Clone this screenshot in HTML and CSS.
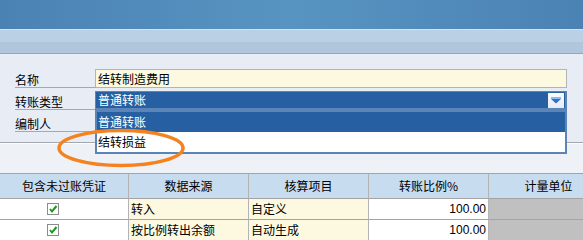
FILE: index.html
```html
<!DOCTYPE html>
<html lang="zh-CN">
<head>
  <meta charset="UTF-8" />
  <title>转账定义</title>
  <link rel="stylesheet" href="styles.css">
</head>
<body>
  <div class="window">
    <div class="titlebar"></div>
    <div class="toolbar"></div>

    <section class="form">
      <div class="form-row">
        <div class="label">名称</div>
        <div class="text-input">结转制造费用</div>
      </div>
      <div class="form-row">
        <div class="label">转账类型</div>
        <div class="select">
          <span>普通转账</span>
          <span class="select-btn">
            <svg width="10" height="7" viewBox="0 0 10 7">
              <rect x="0" y="0" width="10" height="2" fill="#8fb8ec"/>
              <polygon points="0,2 10,2 5,6.5" fill="#2f6fd0"/>
            </svg>
          </span>
          <ul class="select-list">
            <li class="selected">普通转账</li>
            <li>结转损益</li>
          </ul>
        </div>
      </div>
      <div class="form-row">
        <div class="label">编制人</div>
        <div></div>
      </div>

      <svg class="mark" width="132" height="44" viewBox="0 0 132 44">
        <ellipse cx="65" cy="21" rx="62" ry="17.5" fill="none" stroke="#f5821f" stroke-width="3.5"/>
      </svg>
    </section>

    <section class="grid-area">
      <div class="grid">
        <div class="cell head">包含未过账凭证</div>
        <div class="cell head">数据来源</div>
        <div class="cell head">核算项目</div>
        <div class="cell head">转账比例%</div>
        <div class="cell head">计量单位</div>

        <div class="cell check"><svg width="12" height="12" viewBox="0 0 12 12"><rect x="0.5" y="0.5" width="11" height="11" fill="#fff" stroke="#8c8c8c"/><path d="M3 6 L5 8.5 L9.5 3" fill="none" stroke="#1a9a1a" stroke-width="2"/></svg></div>
        <div class="cell cream">转入</div>
        <div class="cell cream">自定义</div>
        <div class="cell num">100.00</div>
        <div class="cell grey"></div>

        <div class="cell check"><svg width="12" height="12" viewBox="0 0 12 12"><rect x="0.5" y="0.5" width="11" height="11" fill="#fff" stroke="#8c8c8c"/><path d="M3 6 L5 8.5 L9.5 3" fill="none" stroke="#1a9a1a" stroke-width="2"/></svg></div>
        <div class="cell cream">按比例转出余额</div>
        <div class="cell cream">自动生成</div>
        <div class="cell num">100.00</div>
        <div class="cell grey"></div>
      </div>
    </section>
  </div>
</body>
</html>
```

FILE: styles.css
```css
body {
  margin: 0;
  font-family: "Noto Sans CJK SC", "Liberation Sans", sans-serif;
  font-size: 12px;
  color: #000;
  background: #eef2f7;
}
.window {
  width: 583px;
  height: 240px;
  overflow: hidden;
}
.titlebar {
  height: 29px;
  background: linear-gradient(90deg, #4a82b4 0%, #5894c2 50%, #4a82b4 100%);
}
.toolbar {
  height: 23px;
  border-top: 1px solid #d2e2f2;
  border-bottom: 1px solid #98a4b4;
  background: linear-gradient(#bbd0e5 0, #bbd0e5 12px, #b0c6dc 12px, #b0c6dc 100%);
}
.form {
  position: relative;
  background: #e8ecf4;
  padding: 12px 0 10px 15px;
  border-bottom: 1px solid #a4a8b0;
}
.form-row {
  display: grid;
  grid-template-columns: 80px 472px;
  height: 22px;
}
.label {
  box-sizing: border-box;
  height: 22px;
  padding-top: 6px;
  line-height: 15px;
  border-bottom: 1px solid #a8a8a8;
}
.text-input {
  box-sizing: border-box;
  margin-top: 3px;
  height: 19px;
  padding-left: 2px;
  line-height: 17px;
  background: #fcf9e0;
  border: 1px solid #b4b4b4;
}
.select {
  position: relative;
  box-sizing: border-box;
  margin-top: 3px;
  height: 18px;
  padding-left: 2px;
  line-height: 16px;
  color: #fff;
  background: #2660a2;
  border: 1px solid #5b84b8;
  border-right-width: 2px;
}
.select-btn {
  position: absolute;
  right: 1px;
  top: 1px;
  width: 16px;
  height: 15px;
  display: flex;
  align-items: center;
  justify-content: center;
  background: linear-gradient(#fbfcfe, #e4ecf4);
}
.select-list {
  position: absolute;
  left: -1px;
  right: -2px;
  top: 16px;
  margin: 0;
  padding: 0;
  list-style: none;
  border: 2px solid #5b84b8;
  border-top-width: 4px;
  z-index: 1;
}
.select-list li {
  height: 20px;
  line-height: 20px;
  padding-left: 1px;
  color: #000;
  background: #fff;
}
.select-list li.selected {
  color: #fff;
  background: #2660a2;
}
.mark {
  position: absolute;
  left: 56px;
  top: 73px;
  z-index: 2;
}
.grid-area {
  border-top: 1px solid #fbfcfd;
  padding-top: 29px;
}
.grid {
  display: grid;
  grid-template-columns: 129px 120px 120px 120px 120px;
  border-top: 1px solid #a4a4a4;
}
.cell {
  box-sizing: border-box;
  height: 21px;
  line-height: 20px;
  padding-left: 2px;
  border-right: 1px solid #b4b4b4;
  border-bottom: 1px solid #a4a4a4;
  background: #fff;
  white-space: nowrap;
}
.cell.head {
  height: 25px;
  line-height: 24px;
  padding-left: 0;
  text-align: center;
  background: #c8dcf0;
}
.cell.cream {
  background: #fcf9e0;
}
.cell.num {
  font-family: "Liberation Sans", sans-serif;
  text-align: right;
  padding-right: 2px;
}
.cell.grey {
  background: #c0c0c0;
}
.cell.check {
  display: flex;
  align-items: center;
  padding-left: 47px;
}
```
